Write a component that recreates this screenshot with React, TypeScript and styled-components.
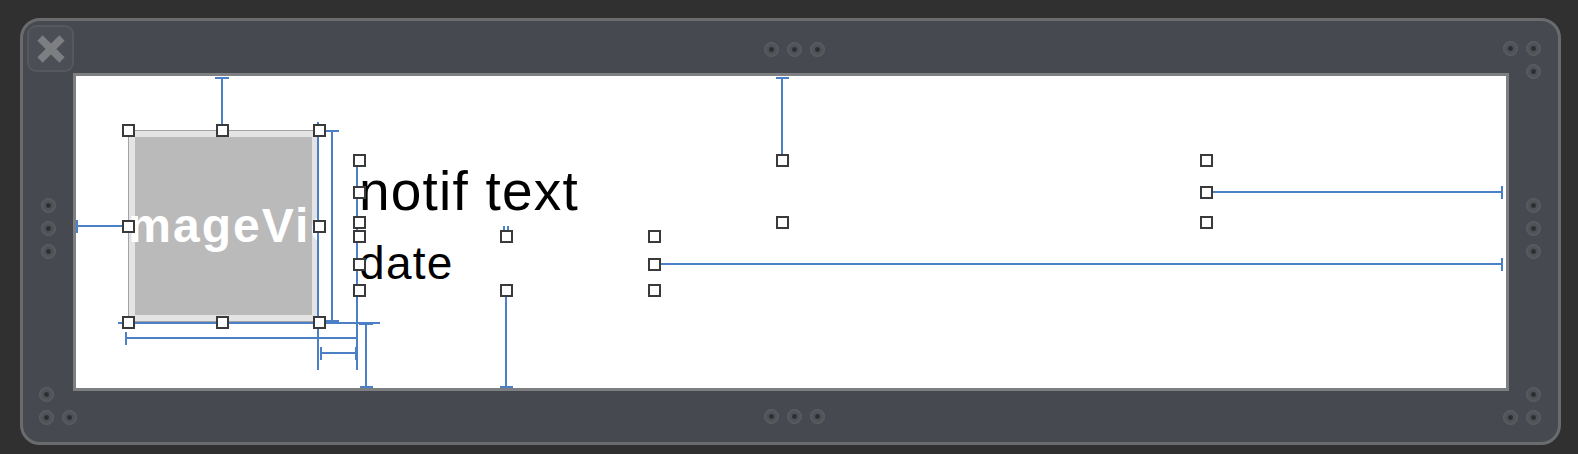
import React from "react";
import styled, { createGlobalStyle } from "styled-components";

const GlobalStyle = createGlobalStyle`
  html, body { margin: 0; padding: 0; background: #303030; }
  body { font-family: "Liberation Sans", Arial, sans-serif; }
`;

const Stage = styled.div`
  width: 1578px;
  height: 454px;
  box-sizing: border-box;
  background: #303030;
  padding: 18px 17px 9px 20px;
`;

const Panel = styled.div`
  box-sizing: border-box;
  width: 1541px;
  height: 427px;
  border: 3px solid #6a6b6d;
  border-radius: 20px;
  background: #464a50;
  display: grid;
  grid-template-columns: 50px 1436px 49px;
  grid-template-rows: 52px 318px 51px;
`;

const Bar = styled.div`
  grid-column: 1 / -1;
  display: grid;
  grid-template-columns: 1fr auto 1fr;
  align-items: center;
  padding-left: 7px;
`;

const SideColumn = styled.div`
  display: flex;
  align-items: center;
  justify-content: center;
  padding-bottom: 8px;
`;

const DotStack = styled.div<{ $dir: "row" | "column" }>`
  display: flex;
  flex-direction: ${(p) => p.$dir};
  gap: 8px;
`;

const Dot = styled.span`
  display: block;
  width: 15px;
  height: 15px;
  border-radius: 50%;
  box-sizing: border-box;
  border: 1px solid #5d6065;
  background: radial-gradient(circle, #2c2e31 0 1.8px, #4d5055 3px, #595c61 100%);
`;

const Cluster = styled.div<{ $top: number; $side: "start" | "end"; $inset: number }>`
  display: grid;
  grid-template-columns: 15px 15px;
  grid-template-rows: 15px 15px;
  gap: 8px;
  align-self: start;
  justify-self: ${(p) => p.$side};
  margin-top: ${(p) => p.$top}px;
  ${(p) => (p.$side === "end" ? `margin-right: ${p.$inset}px;` : `margin-left: ${p.$inset}px;`)}
`;

const Empty = styled.span`
  display: block;
`;

const CloseButton = styled.div`
  box-sizing: border-box;
  width: 47px;
  height: 47px;
  margin: 4px 0 0 -3px;
  align-self: start;
  justify-self: start;
  border: 2px solid #55585d;
  border-radius: 9px;
  background: #4b4e54;
  display: flex;
  align-items: center;
  justify-content: center;
`;

const Canvas = styled.div`
  position: relative;
  box-sizing: border-box;
  border: 3px solid #7e7f80;
  background: #ffffff;
  overflow: hidden;
`;

const ImageBox = styled.div`
  position: absolute;
  left: 52px;
  top: 54px;
  width: 191px;
  height: 192px;
  box-sizing: border-box;
  border: 1px solid #a4a4a4;
  background: #bababa;
  box-shadow: inset 0 0 0 6px #e4e4e4;
  overflow: hidden;
  display: flex;
  align-items: flex-start;
  padding-top: 71px;
`;

const Placeholder = styled.span`
  margin-left: -16px;
  white-space: nowrap;
  font-family: "Liberation Sans", Arial, sans-serif;
  font-weight: 700;
  font-size: 48px;
  line-height: 48px;
  letter-spacing: 2px;
  color: #ffffff;
`;

const Label = styled.div<{ $left: number; $top: number; $w: number; $h: number; $size: number; $track: number }>`
  position: absolute;
  left: ${(p) => p.$left}px;
  top: ${(p) => p.$top}px;
  width: ${(p) => p.$w}px;
  height: ${(p) => p.$h}px;
  font-family: "Liberation Sans", Arial, sans-serif;
  font-size: ${(p) => p.$size}px;
  line-height: ${(p) => p.$h}px;
  letter-spacing: ${(p) => p.$track}px;
  color: #000000;
  white-space: nowrap;
`;

const Overlay = styled.svg`
  position: absolute;
  left: 0;
  top: 0;
`;

const Handle = styled.div`
  position: absolute;
  width: 13px;
  height: 13px;
  box-sizing: border-box;
  border: 2px solid #3a3a3a;
  background: #ffffff;
`;

type Seg = [number, number, number, number];

const BLUE = "#4b80c6";

const constraints: Seg[] = [
  // image top
  [146, 2, 146, 54],
  [139, 2, 153, 2],
  // image leading
  [0, 150, 52, 150],
  [1, 144, 1, 157],
  // image height
  [256, 54, 256, 245],
  [244, 55, 263, 55],
  [250, 245, 263, 245],
  // image right edge guide
  [242, 46, 242, 294],
  // labels leading guide
  [281, 84, 281, 294],
  // image bottom guide
  [42, 247, 304, 247],
  // image width
  [50, 262, 242, 262],
  [50, 256, 50, 269],
  [242, 256, 242, 269],
  // spacing image -> labels
  [242, 262, 281, 262],
  [281, 256, 281, 269],
  [245, 277, 280, 277],
  [245, 271, 245, 284],
  [280, 271, 280, 284],
  // bottom spacing
  [290, 248, 290, 311],
  [283, 248, 297, 248],
  [284, 311, 297, 311],
  // date bottom
  [430, 214, 430, 311],
  [424, 311, 437, 311],
  // notif top
  [706, 2, 706, 84],
  [700, 2, 713, 2],
  // notif trailing
  [1130, 116, 1426, 116],
  [1426, 110, 1426, 123],
  [1132, 116, 1132, 122],
  // date trailing
  [578, 188, 1426, 188],
  [1426, 182, 1426, 195],
  // label spacing ticks
  [428, 150, 428, 156],
  [432, 150, 432, 156],
];

const handles: [number, number][] = [
  // image view
  [52, 54], [146, 54], [243, 54], [52, 150], [243, 150], [52, 246], [146, 246], [243, 246],
  // notif text
  [283, 84], [706, 84], [1130, 84], [283, 116], [1130, 116], [283, 146], [706, 146], [1130, 146],
  // date
  [283, 160], [430, 160], [578, 160], [283, 188], [578, 188], [283, 214], [430, 214], [578, 214],
];

const Dots3 = ({ dir }: { dir: "row" | "column" }) => (
  <DotStack $dir={dir}>
    <Dot />
    <Dot />
    <Dot />
  </DotStack>
);

export default function App() {
  return (
    <>
      <GlobalStyle />
      <Stage>
        <Panel>
          <Bar>
            <CloseButton>
              <svg width="30" height="30" viewBox="0 0 30 30">
                <path d="M4 4 L26 26 M26 4 L4 26" stroke="#7c7e81" strokeWidth="7.5" strokeLinecap="butt" />
              </svg>
            </CloseButton>
            <Dots3 dir="row" />
            <Cluster $top={19.5} $side="end" $inset={17.5}>
              <Dot />
              <Dot />
              <Empty />
              <Dot />
            </Cluster>
          </Bar>

          <SideColumn>
            <Dots3 dir="column" />
          </SideColumn>

          <Canvas>
            <ImageBox>
              <Placeholder>ImageView</Placeholder>
            </ImageBox>
            <Label $left={283} $top={84} $w={847} $h={62} $size={55} $track={1.2}>
              notif text
            </Label>
            <Label $left={283} $top={160} $w={295} $h={54} $size={46} $track={1.3}>
              date
            </Label>
            <Overlay width="1430" height="312" viewBox="0 0 1430 312">
              {constraints.map(([x1, y1, x2, y2], i) => (
                <line key={i} x1={x1} y1={y1} x2={x2} y2={y2} stroke={BLUE} strokeWidth="2" />
              ))}
            </Overlay>
            {handles.map(([cx, cy], i) => (
              <Handle key={i} style={{ left: cx - 6.5, top: cy - 6.5 }} />
            ))}
          </Canvas>

          <SideColumn>
            <Dots3 dir="column" />
          </SideColumn>

          <Bar>
            <Cluster $top={-4.5} $side="start" $inset={8.5}>
              <Dot />
              <Empty />
              <Dot />
              <Dot />
            </Cluster>
            <Dots3 dir="row" />
            <Cluster $top={-4.5} $side="end" $inset={17.5}>
              <Empty />
              <Dot />
              <Dot />
              <Dot />
            </Cluster>
          </Bar>
        </Panel>
      </Stage>
    </>
  );
}
